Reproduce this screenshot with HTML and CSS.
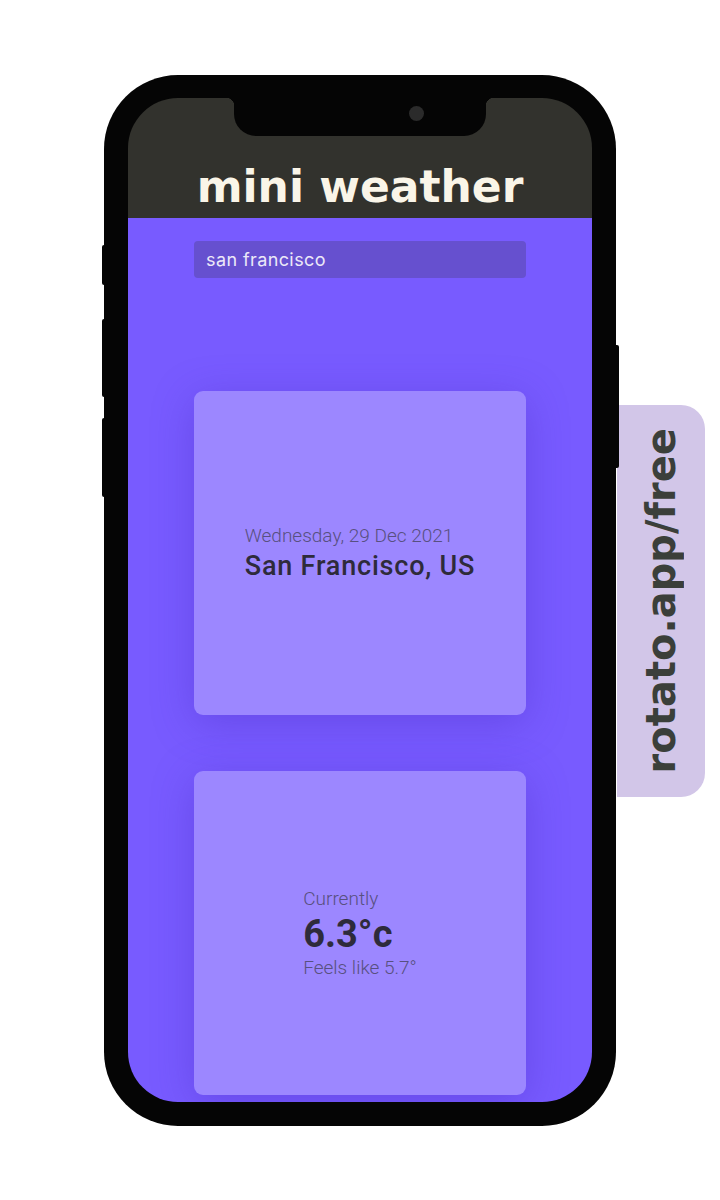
FILE: index.html
```html
<!DOCTYPE html>
<html lang="en">
<head>
    <meta charset="UTF-8">
    <meta name="viewport" content="width=device-width, initial-scale=1.0">
    <title>mini weather</title>
    <link rel="stylesheet" href="styles.css">
</head>
<body>
    <div class="stage">
        <div class="phone">
            <span class="side-btn btn-silent"></span>
            <span class="side-btn btn-vol-up"></span>
            <span class="side-btn btn-vol-down"></span>
            <span class="side-btn btn-power"></span>

            <div class="screen">
                <div class="notch"><span class="camera"></span></div>

                <header class="app-header">
                    <h1>mini weather</h1>
                </header>

                <main class="app-main">
                    <input type="text" class="search" id="cityInput" value="san francisco">

                    <section class="card">
                        <div class="card-body">
                            <p class="date">Wednesday, 29 Dec 2021</p>
                            <h2 class="city">San Francisco, US</h2>
                        </div>
                    </section>

                    <section class="card">
                        <div class="card-body">
                            <p class="label">Currently</p>
                            <p class="temp">6.3°c</p>
                            <p class="feels">Feels like 5.7°</p>
                        </div>
                    </section>
                </main>
            </div>
        </div>

        <aside class="promo">
            <span>rotato.app/free</span>
        </aside>
    </div>
</body>
</html>
```

FILE: styles.css
```css
body {
    margin: 0;
    background-color: #ffffff;
    font-family: 'Roboto', 'Noto Sans', sans-serif;
    overflow: hidden;
}

.stage {
    display: flex;
    align-items: flex-start;
    padding: 75px 0 0 104px;
}

/* phone body */
.phone {
    position: relative;
    width: 512px;
    height: 1051px;
    box-sizing: border-box;
    padding: 23px 24px 24px;
    background-color: #050505;
    border-radius: 74px;
}

.side-btn {
    position: absolute;
    width: 6px;
    background-color: #050505;
    border-radius: 2px;
}

.btn-silent {
    left: -2px;
    top: 170px;
    height: 40px;
}

.btn-vol-up {
    left: -2px;
    top: 244px;
    height: 78px;
}

.btn-vol-down {
    left: -2px;
    top: 343px;
    height: 79px;
}

.btn-power {
    right: -3px;
    top: 270px;
    height: 123px;
}

.screen {
    position: relative;
    height: 100%;
    display: flex;
    flex-direction: column;
    border-radius: 50px;
    overflow: hidden;
}

.notch {
    position: absolute;
    top: 0;
    left: 50%;
    transform: translateX(-50%);
    width: 252px;
    height: 38px;
    background-color: #050505;
    border-radius: 0 0 22px 22px;
}

.notch::before,
.notch::after {
    content: '';
    position: absolute;
    top: 0;
    width: 8px;
    height: 8px;
}

.notch::before {
    left: -8px;
    background: radial-gradient(circle at 0 100%, transparent 8px, #050505 8.5px);
}

.notch::after {
    right: -8px;
    background: radial-gradient(circle at 100% 100%, transparent 8px, #050505 8.5px);
}

.camera {
    position: absolute;
    left: 175px;
    top: 8px;
    width: 15px;
    height: 15px;
    border-radius: 50%;
    background-color: #2b2b2b;
}

/* app */
.app-header {
    height: 120px;
    box-sizing: border-box;
    display: flex;
    justify-content: center;
    align-items: flex-end;
    padding-bottom: 5px;
    background-color: #32322d;
}

.app-header h1 {
    margin: 0;
    font-family: 'DejaVu Sans', sans-serif;
    font-weight: bold;
    font-size: 44px;
    line-height: 52px;
    color: #faf5e8;
}

.app-main {
    flex: 1;
    display: flex;
    flex-direction: column;
    align-items: center;
    padding-top: 23px;
    background-color: #785bff;
}

.search {
    width: 332px;
    height: 37px;
    box-sizing: border-box;
    padding: 0 12px;
    border: none;
    border-radius: 4px;
    background-color: #6650cf;
    color: #ece8f8;
    font-family: 'Inter', sans-serif;
    font-size: 18px;
    letter-spacing: 0.4px;
    outline: none;
}

.card {
    flex-shrink: 0;
    width: 332px;
    height: 324px;
    margin-top: 113px;
    display: flex;
    justify-content: center;
    align-items: center;
    background-color: #9c87ff;
    border-radius: 9px;
    box-shadow: 0 8px 40px rgba(70, 40, 190, 0.35);
}

.card + .card {
    margin-top: 56px;
}

.card-body p,
.card-body h2 {
    margin: 0;
}

.date {
    font-weight: 300;
    font-size: 19px;
    line-height: 24px;
    color: #585080;
}

.city {
    margin-top: 2px !important;
    font-weight: 500;
    font-size: 27px;
    letter-spacing: 0.8px;
    line-height: 32px;
    color: #2e2b3b;
}

.label,
.feels {
    font-weight: 300;
    font-size: 19px;
    line-height: 22px;
    color: #585080;
}

.temp {
    margin-top: 4px !important;
    font-weight: bold;
    font-size: 38px;
    line-height: 40px;
    color: #2e2b3b;
}

.feels {
    margin-top: 3px !important;
}

/* side promo tab */
.promo {
    width: 88px;
    height: 392px;
    margin-top: 330px;
    margin-left: 1px;
    display: flex;
    justify-content: center;
    align-items: center;
    background-color: #d2c6e8;
    border-radius: 0 24px 24px 0;
}

.promo span {
    writing-mode: vertical-rl;
    transform: rotate(180deg);
    font-family: 'DejaVu Sans', sans-serif;
    font-weight: bold;
    font-size: 40px;
    color: #3b3f3a;
}
```
